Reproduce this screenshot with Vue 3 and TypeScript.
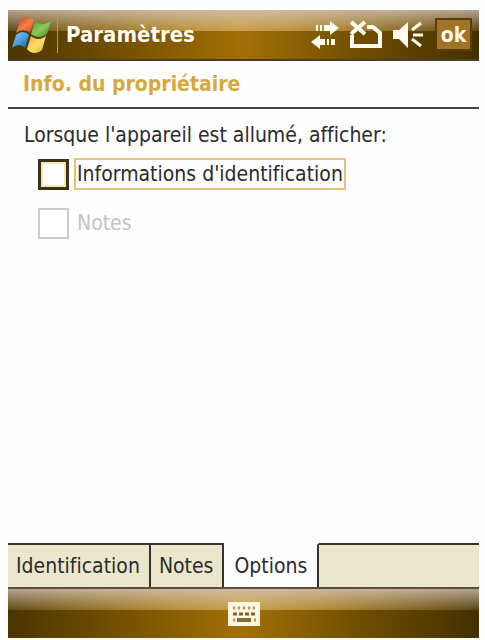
<script setup lang="ts">
import { ref } from 'vue'

interface Choice {
  id: string
  label: string
  checked: boolean
  disabled: boolean
}

const choices = ref<Choice[]>([
  { id: 'identification', label: "Informations d'identification", checked: false, disabled: false },
  { id: 'notes', label: 'Notes', checked: false, disabled: true },
])
const tabs: string[] = ['Identification', 'Notes', 'Options']
const activeTab = ref('Options')
</script>

<template>
  <div class="device">
    <header class="titlebar">
      <svg class="flag" viewBox="0 0 38 38" aria-hidden="true">
        <defs>
          <linearGradient id="red" x1="0" y1="0" x2="1" y2="1"><stop offset="0" stop-color="#c8401c" /><stop offset=".55" stop-color="#f4814b" /><stop offset="1" stop-color="#c93a12" /></linearGradient>
          <linearGradient id="green" x1="0" y1="0" x2="1" y2="1"><stop offset="0" stop-color="#4c9a2c" /><stop offset=".5" stop-color="#8cc85c" /><stop offset="1" stop-color="#3f8a22" /></linearGradient>
          <linearGradient id="blue" x1="0" y1="0" x2="1" y2="1"><stop offset="0" stop-color="#8cc9f3" /><stop offset=".5" stop-color="#4b9fe0" /><stop offset="1" stop-color="#1c5fa8" /></linearGradient>
          <linearGradient id="yellow" x1="0" y1="0" x2="1" y2="1"><stop offset="0" stop-color="#e7a826" /><stop offset=".5" stop-color="#ffdf6e" /><stop offset="1" stop-color="#e8b32a" /></linearGradient>
        </defs>
        <path fill="url(#red)" d="M7 5C11 0 16 0 21 4L17 17C13 13 8 13 3 17Z" />
        <path fill="url(#green)" d="M22 5C27 9 33 9 38 5L34 18C29 22 23 22 18 18Z" />
        <path fill="url(#blue)" d="M3 19C8 15 12 15 16 19L12 32C8 28 4 28 -1 32Z" />
        <path fill="url(#yellow)" d="M18 20C23 24 28 24 33 20L29 34C24 38 18 38 14 33Z" />
      </svg>
      <span class="divider"></span>
      <h1>Paramètres</h1>
      <div class="status">
        <svg class="arrows" viewBox="0 0 30 30" fill="#fffdf0" aria-label="Connexion" role="img">
          <path d="M6 5h2v6H6zM10 5h2v6h-2zM14 5h6V1l9 7-9 7v-4h-6zM10 15v4h5v6h-5v4L1 22zM17 19h2v6h-2zM21 19h4v6h-4z" />
        </svg>
        <svg class="signal" viewBox="0 0 34 30" fill="none" stroke="#fffdf0" aria-label="Pas de service" role="img">
          <path stroke-width="4" d="M2 2L16 14M16 2L2 14" />
          <path stroke-width="4" d="M3 15V26H31V13L24 7H18" />
        </svg>
        <svg class="speaker" viewBox="0 0 32 28" aria-label="Volume" role="img">
          <path fill="#fffdf0" d="M1 9H7L16 1V27L7 18H1Z" />
          <path fill="none" stroke="#fffdf0" stroke-width="3" d="M20 9L29 2M21 14H31M20 18L29 25" />
        </svg>
      </div>
      <button class="ok" type="button">ok</button>
    </header>

    <h2>Info. du propriétaire</h2>

    <main>
      <fieldset>
        <legend>Lorsque l'appareil est allumé, afficher:</legend>
        <div v-for="choice in choices" :key="choice.id" class="choice">
          <input :id="choice.id" v-model="choice.checked" type="checkbox" :disabled="choice.disabled" />
          <label :for="choice.id">{{ choice.label }}</label>
        </div>
      </fieldset>
    </main>

    <nav class="tabs">
      <button
        v-for="tab in tabs"
        :key="tab"
        type="button"
        :class="{ active: tab === activeTab }"
        @click="activeTab = tab"
      >{{ tab }}</button>
      <span class="rest"></span>
    </nav>

    <footer>
      <button type="button" class="keyboard" aria-label="Clavier">
        <svg viewBox="0 0 32 24" aria-hidden="true">
          <path fill="#fff6df" d="M0 0H32V24H0Z" />
          <path stroke="#b8925c" stroke-width="3" stroke-dasharray="2 3" d="M5 6H29" />
          <path stroke="#80602d" stroke-width="3" stroke-dasharray="4 2" d="M5 12H28" />
          <path stroke="#8a6c2c" stroke-width="4" d="M9 18H23" />
          <path stroke="#b8925c" stroke-width="3" d="M5 18H7M26 18H28" />
        </svg>
      </button>
    </footer>
  </div>
</template>

<style>
body {
  background: #fefefe;
}
</style>

<style scoped>
.device {
  box-sizing: border-box;
  display: flex;
  flex-direction: column;
  min-height: 100vh;
  padding: 10px 6px 2px 8px;
  color: #2b2b2b;
  font-family: Tahoma, "DejaVu Sans Condensed", "DejaVu Sans", sans-serif;
  font-size: 21px;
  font-variant-ligatures: none;
}

button {
  margin: 0;
  border: 0;
  border-radius: 0;
  color: inherit;
  font: inherit;
  font-variant-ligatures: none;
}

.titlebar,
footer {
  box-sizing: border-box;
  background:
    linear-gradient(rgba(214, 200, 190, 0.75), rgba(214, 190, 150, 0.1) 43%, transparent 44%),
    linear-gradient(90deg, rgba(200, 160, 80, 0.05), rgba(210, 165, 80, 0.8) 50%, rgba(200, 160, 80, 0.05)) top / 100% 43% no-repeat,
    linear-gradient(90deg, #4a3500, #765200 25%, #a37008 50%, #6f4d00 75%, #433000);
}

.titlebar {
  display: flex;
  align-items: center;
  height: 51px;
  padding: 0 7px 0 5px;
  border-bottom: 2px solid #4a3d28;
}

.flag {
  width: 38px;
  height: 38px;
  overflow: visible;
}

.divider {
  width: 1px;
  height: 36px;
  margin: 0 8px 0 6px;
  background: #b09a6e;
}

h1,
h2 {
  margin: 0;
  font-size: 22px;
  font-weight: bold;
  white-space: nowrap;
}

h1 {
  color: #fffdf5;
}

.status {
  display: flex;
  align-items: center;
  gap: 9px;
  margin-left: auto;
}

.arrows {
  width: 30px;
  height: 30px;
}

.signal {
  width: 34px;
  height: 30px;
}

.speaker {
  width: 32px;
  height: 28px;
}

.ok {
  box-sizing: border-box;
  width: 37px;
  height: 33px;
  margin-left: 11px;
  padding: 0;
  border: 2px solid #5c3c08;
  background: #a07428;
  color: #fff8e6;
  font-size: 21px;
  font-weight: bold;
  line-height: 28px;
}

h2 {
  padding: 0 15px;
  border-bottom: 2px solid #45434a;
  color: #d6a93f;
  font-size: 21px;
  line-height: 46px;
}

main {
  flex: 1;
  padding: 14px 16px;
}

fieldset {
  min-width: 0;
  margin: 0;
  padding: 0;
  border: 0;
}

legend {
  padding: 0;
  line-height: 24px;
  white-space: nowrap;
}

.choice {
  display: flex;
  align-items: center;
  gap: 5px;
  margin: 11px 0 17px 14px;
}

.choice input {
  appearance: none;
  box-sizing: border-box;
  width: 31px;
  height: 31px;
  margin: 0;
  border: 3px solid #3a3218;
  background: #fff;
  box-shadow: inset 0 0 0 2px #f7e7ad;
}

.choice input:checked {
  background: #3a3218;
}

.choice input:disabled {
  border: 2px solid #cacaca;
  box-shadow: none;
}

.choice label {
  padding: 0 1px;
  border: 2px solid #e2c17b;
  line-height: 28px;
  white-space: nowrap;
}

.choice input:disabled + label {
  border-color: transparent;
  color: #c3c3c3;
}

.tabs {
  display: flex;
  border-bottom: 2px solid #58503f;
}

.tabs button,
.rest {
  box-sizing: border-box;
  height: 44px;
  border-top: 2px solid #35332b;
  background: #ebe7cd;
}

.tabs button {
  padding: 0 9px 0 8px;
  border-right: 2px solid #35332b;
  white-space: nowrap;
}

.tabs .active {
  padding: 0 10px;
  border-top-color: #fefefe;
  background: #fefefe;
}

.rest {
  flex: 1;
}

footer {
  display: flex;
  align-items: center;
  justify-content: center;
  height: 49px;
}

.keyboard {
  display: flex;
  padding: 0;
  background: none;
}

.keyboard svg {
  width: 32px;
  height: 24px;
}
</style>
